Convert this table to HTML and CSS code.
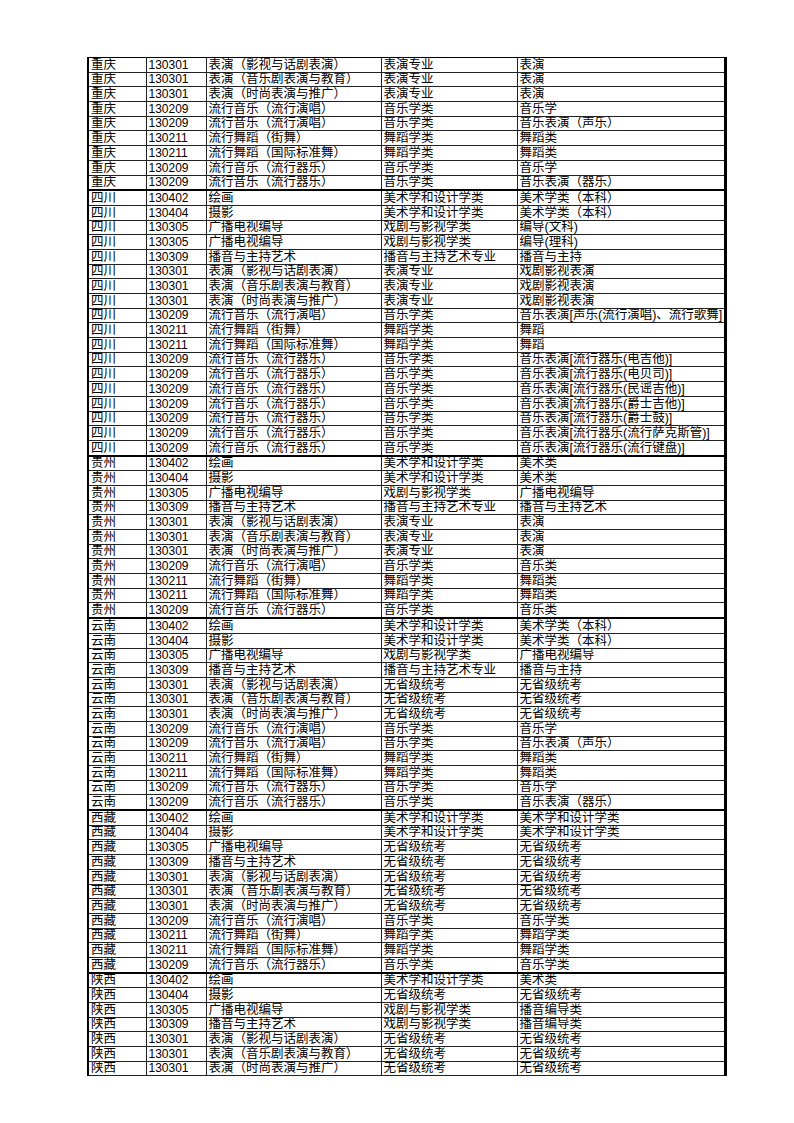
FILE: index.html
```html
<!DOCTYPE html>
<html lang="zh">
<head>
<meta charset="utf-8">
<title>专业对照表</title>
<link rel="stylesheet" href="styles.css">
</head>
<body>
<div class="page">
<table class="sheet">
<colgroup><col class="c1"><col class="c2"><col class="c3"><col class="c4"><col class="c5"></colgroup>
<tbody>
<tr><td>重庆</td><td class="num">130301</td><td>表演（影视与话剧表演）</td><td>表演专业</td><td>表演</td></tr>
<tr><td>重庆</td><td class="num">130301</td><td>表演（音乐剧表演与教育）</td><td>表演专业</td><td>表演</td></tr>
<tr><td>重庆</td><td class="num">130301</td><td>表演（时尚表演与推广）</td><td>表演专业</td><td>表演</td></tr>
<tr><td>重庆</td><td class="num">130209</td><td>流行音乐（流行演唱）</td><td>音乐学类</td><td>音乐学</td></tr>
<tr><td>重庆</td><td class="num">130209</td><td>流行音乐（流行演唱）</td><td>音乐学类</td><td>音乐表演（声乐）</td></tr>
<tr><td>重庆</td><td class="num">130211</td><td>流行舞蹈（街舞）</td><td>舞蹈学类</td><td>舞蹈类</td></tr>
<tr><td>重庆</td><td class="num">130211</td><td>流行舞蹈（国际标准舞）</td><td>舞蹈学类</td><td>舞蹈类</td></tr>
<tr><td>重庆</td><td class="num">130209</td><td>流行音乐（流行器乐）</td><td>音乐学类</td><td>音乐学</td></tr>
<tr><td>重庆</td><td class="num">130209</td><td>流行音乐（流行器乐）</td><td>音乐学类</td><td>音乐表演（器乐）</td></tr>
<tr class="grp"><td>四川</td><td class="num">130402</td><td>绘画</td><td>美术学和设计学类</td><td>美术学类（本科）</td></tr>
<tr><td>四川</td><td class="num">130404</td><td>摄影</td><td>美术学和设计学类</td><td>美术学类（本科）</td></tr>
<tr><td>四川</td><td class="num">130305</td><td>广播电视编导</td><td>戏剧与影视学类</td><td>编导(文科)</td></tr>
<tr><td>四川</td><td class="num">130305</td><td>广播电视编导</td><td>戏剧与影视学类</td><td>编导(理科)</td></tr>
<tr><td>四川</td><td class="num">130309</td><td>播音与主持艺术</td><td>播音与主持艺术专业</td><td>播音与主持</td></tr>
<tr><td>四川</td><td class="num">130301</td><td>表演（影视与话剧表演）</td><td>表演专业</td><td>戏剧影视表演</td></tr>
<tr><td>四川</td><td class="num">130301</td><td>表演（音乐剧表演与教育）</td><td>表演专业</td><td>戏剧影视表演</td></tr>
<tr><td>四川</td><td class="num">130301</td><td>表演（时尚表演与推广）</td><td>表演专业</td><td>戏剧影视表演</td></tr>
<tr><td>四川</td><td class="num">130209</td><td>流行音乐（流行演唱）</td><td>音乐学类</td><td>音乐表演[声乐(流行演唱)、流行歌舞]</td></tr>
<tr><td>四川</td><td class="num">130211</td><td>流行舞蹈（街舞）</td><td>舞蹈学类</td><td>舞蹈</td></tr>
<tr><td>四川</td><td class="num">130211</td><td>流行舞蹈（国际标准舞）</td><td>舞蹈学类</td><td>舞蹈</td></tr>
<tr><td>四川</td><td class="num">130209</td><td>流行音乐（流行器乐）</td><td>音乐学类</td><td>音乐表演[流行器乐(电吉他)]</td></tr>
<tr><td>四川</td><td class="num">130209</td><td>流行音乐（流行器乐）</td><td>音乐学类</td><td>音乐表演[流行器乐(电贝司)]</td></tr>
<tr><td>四川</td><td class="num">130209</td><td>流行音乐（流行器乐）</td><td>音乐学类</td><td>音乐表演[流行器乐(民谣吉他)]</td></tr>
<tr><td>四川</td><td class="num">130209</td><td>流行音乐（流行器乐）</td><td>音乐学类</td><td>音乐表演[流行器乐(爵士吉他)]</td></tr>
<tr><td>四川</td><td class="num">130209</td><td>流行音乐（流行器乐）</td><td>音乐学类</td><td>音乐表演[流行器乐(爵士鼓)]</td></tr>
<tr><td>四川</td><td class="num">130209</td><td>流行音乐（流行器乐）</td><td>音乐学类</td><td>音乐表演[流行器乐(流行萨克斯管)]</td></tr>
<tr><td>四川</td><td class="num">130209</td><td>流行音乐（流行器乐）</td><td>音乐学类</td><td>音乐表演[流行器乐(流行键盘)]</td></tr>
<tr class="grp"><td>贵州</td><td class="num">130402</td><td>绘画</td><td>美术学和设计学类</td><td>美术类</td></tr>
<tr><td>贵州</td><td class="num">130404</td><td>摄影</td><td>美术学和设计学类</td><td>美术类</td></tr>
<tr><td>贵州</td><td class="num">130305</td><td>广播电视编导</td><td>戏剧与影视学类</td><td>广播电视编导</td></tr>
<tr><td>贵州</td><td class="num">130309</td><td>播音与主持艺术</td><td>播音与主持艺术专业</td><td>播音与主持艺术</td></tr>
<tr><td>贵州</td><td class="num">130301</td><td>表演（影视与话剧表演）</td><td>表演专业</td><td>表演</td></tr>
<tr><td>贵州</td><td class="num">130301</td><td>表演（音乐剧表演与教育）</td><td>表演专业</td><td>表演</td></tr>
<tr><td>贵州</td><td class="num">130301</td><td>表演（时尚表演与推广）</td><td>表演专业</td><td>表演</td></tr>
<tr><td>贵州</td><td class="num">130209</td><td>流行音乐（流行演唱）</td><td>音乐学类</td><td>音乐类</td></tr>
<tr><td>贵州</td><td class="num">130211</td><td>流行舞蹈（街舞）</td><td>舞蹈学类</td><td>舞蹈类</td></tr>
<tr><td>贵州</td><td class="num">130211</td><td>流行舞蹈（国际标准舞）</td><td>舞蹈学类</td><td>舞蹈类</td></tr>
<tr><td>贵州</td><td class="num">130209</td><td>流行音乐（流行器乐）</td><td>音乐学类</td><td>音乐类</td></tr>
<tr class="grp"><td>云南</td><td class="num">130402</td><td>绘画</td><td>美术学和设计学类</td><td>美术学类（本科）</td></tr>
<tr><td>云南</td><td class="num">130404</td><td>摄影</td><td>美术学和设计学类</td><td>美术学类（本科）</td></tr>
<tr><td>云南</td><td class="num">130305</td><td>广播电视编导</td><td>戏剧与影视学类</td><td>广播电视编导</td></tr>
<tr><td>云南</td><td class="num">130309</td><td>播音与主持艺术</td><td>播音与主持艺术专业</td><td>播音与主持</td></tr>
<tr><td>云南</td><td class="num">130301</td><td>表演（影视与话剧表演）</td><td>无省级统考</td><td>无省级统考</td></tr>
<tr><td>云南</td><td class="num">130301</td><td>表演（音乐剧表演与教育）</td><td>无省级统考</td><td>无省级统考</td></tr>
<tr><td>云南</td><td class="num">130301</td><td>表演（时尚表演与推广）</td><td>无省级统考</td><td>无省级统考</td></tr>
<tr><td>云南</td><td class="num">130209</td><td>流行音乐（流行演唱）</td><td>音乐学类</td><td>音乐学</td></tr>
<tr><td>云南</td><td class="num">130209</td><td>流行音乐（流行演唱）</td><td>音乐学类</td><td>音乐表演（声乐）</td></tr>
<tr><td>云南</td><td class="num">130211</td><td>流行舞蹈（街舞）</td><td>舞蹈学类</td><td>舞蹈类</td></tr>
<tr><td>云南</td><td class="num">130211</td><td>流行舞蹈（国际标准舞）</td><td>舞蹈学类</td><td>舞蹈类</td></tr>
<tr><td>云南</td><td class="num">130209</td><td>流行音乐（流行器乐）</td><td>音乐学类</td><td>音乐学</td></tr>
<tr><td>云南</td><td class="num">130209</td><td>流行音乐（流行器乐）</td><td>音乐学类</td><td>音乐表演（器乐）</td></tr>
<tr class="grp"><td>西藏</td><td class="num">130402</td><td>绘画</td><td>美术学和设计学类</td><td>美术学和设计学类</td></tr>
<tr><td>西藏</td><td class="num">130404</td><td>摄影</td><td>美术学和设计学类</td><td>美术学和设计学类</td></tr>
<tr><td>西藏</td><td class="num">130305</td><td>广播电视编导</td><td>无省级统考</td><td>无省级统考</td></tr>
<tr><td>西藏</td><td class="num">130309</td><td>播音与主持艺术</td><td>无省级统考</td><td>无省级统考</td></tr>
<tr><td>西藏</td><td class="num">130301</td><td>表演（影视与话剧表演）</td><td>无省级统考</td><td>无省级统考</td></tr>
<tr><td>西藏</td><td class="num">130301</td><td>表演（音乐剧表演与教育）</td><td>无省级统考</td><td>无省级统考</td></tr>
<tr><td>西藏</td><td class="num">130301</td><td>表演（时尚表演与推广）</td><td>无省级统考</td><td>无省级统考</td></tr>
<tr><td>西藏</td><td class="num">130209</td><td>流行音乐（流行演唱）</td><td>音乐学类</td><td>音乐学类</td></tr>
<tr><td>西藏</td><td class="num">130211</td><td>流行舞蹈（街舞）</td><td>舞蹈学类</td><td>舞蹈学类</td></tr>
<tr><td>西藏</td><td class="num">130211</td><td>流行舞蹈（国际标准舞）</td><td>舞蹈学类</td><td>舞蹈学类</td></tr>
<tr><td>西藏</td><td class="num">130209</td><td>流行音乐（流行器乐）</td><td>音乐学类</td><td>音乐学类</td></tr>
<tr class="grp"><td>陕西</td><td class="num">130402</td><td>绘画</td><td>美术学和设计学类</td><td>美术类</td></tr>
<tr><td>陕西</td><td class="num">130404</td><td>摄影</td><td>无省级统考</td><td>无省级统考</td></tr>
<tr><td>陕西</td><td class="num">130305</td><td>广播电视编导</td><td>戏剧与影视学类</td><td>播音编导类</td></tr>
<tr><td>陕西</td><td class="num">130309</td><td>播音与主持艺术</td><td>戏剧与影视学类</td><td>播音编导类</td></tr>
<tr><td>陕西</td><td class="num">130301</td><td>表演（影视与话剧表演）</td><td>无省级统考</td><td>无省级统考</td></tr>
<tr><td>陕西</td><td class="num">130301</td><td>表演（音乐剧表演与教育）</td><td>无省级统考</td><td>无省级统考</td></tr>
<tr><td>陕西</td><td class="num">130301</td><td>表演（时尚表演与推广）</td><td>无省级统考</td><td>无省级统考</td></tr>
</tbody>
</table>
</div>
</body>
</html>
```
FILE: styles.css
```css
html, body {
  margin: 0;
  padding: 0;
  background: #fff;
}
.page {
  padding: 57px 0 0 87px;
}
.sheet {
  border-collapse: collapse;
  table-layout: fixed;
  width: 637px;
  font-family: "Liberation Sans", "Noto Sans CJK SC", sans-serif;
  font-size: 12.5px;
  color: #000;
  border-left: 2px solid #000;
  border-right: 3px solid #000;
}
.c1 { width: 58px; }
.c2 { width: 60px; }
.c3 { width: 175px; }
.c4 { width: 136px; }
.c5 { width: 208px; }
.sheet td {
  border: 1px solid #222;
  padding: 0 1px 0 2px;
  height: 13.7px;
  line-height: 13px;
  white-space: nowrap;
  overflow: hidden;
  vertical-align: bottom;
}
.sheet tr:first-child td { border-top: 1px solid #000; }
.sheet td:first-child { border-left: 2px solid #000; }
.sheet td:last-child { border-right: 3px solid #000; }
.sheet tr.grp td { border-top: 2px solid #000; }
.sheet td.num { font-size: 12px; }
```
